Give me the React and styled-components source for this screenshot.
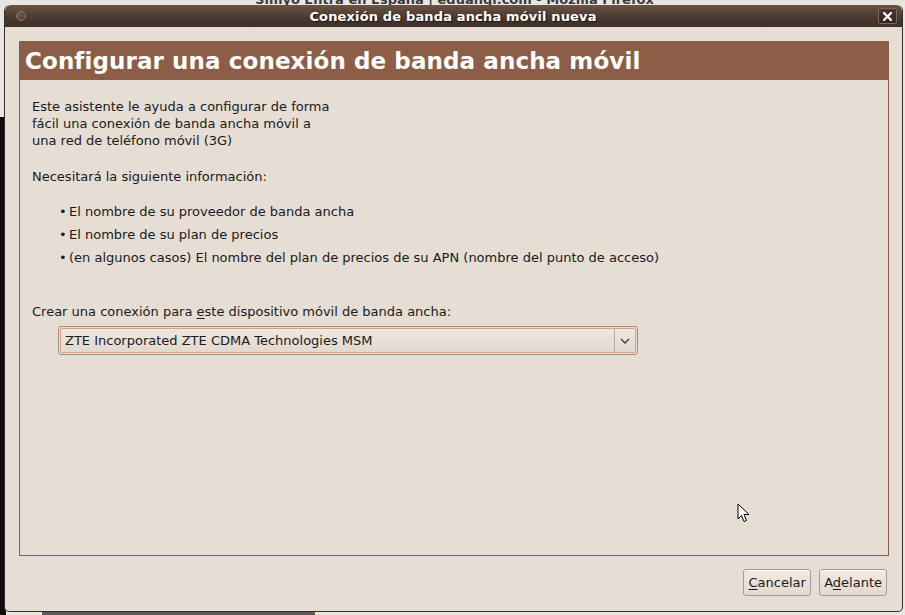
import React from "react";
import styled, { createGlobalStyle } from "styled-components";

const GlobalStyle = createGlobalStyle`
  html, body { margin: 0; padding: 0; }
  body {
    font-family: "DejaVu Sans", "Liberation Sans", sans-serif;
    font-size: 13px;
    color: #1a1a1a;
  }
`;

const Desktop = styled.div`
  position: relative;
  width: 905px;
  height: 615px;
  overflow: hidden;
  background: #e9e6e2;
`;

const BackTitle = styled.div`
  position: absolute;
  left: 0;
  right: 0;
  top: -8px;
  height: 16px;
  text-align: center;
  font-weight: bold;
  font-size: 13px;
  color: #3a3a3a;
  padding-left: 4px;
`;

const BackContent = styled.div`
  position: absolute;
  left: 0;
  top: 117px;
  width: 6px;
  bottom: 0;
  background: #0c0c0c;
`;

const BackStrip = styled.div`
  position: absolute;
  left: 42px;
  width: 273px;
  bottom: 0;
  height: 4px;
  background: #5c5c5c;
`;

const Window = styled.div`
  position: absolute;
  left: 4px;
  top: 5px;
  width: 899px;
  height: 607px;
  display: flex;
  flex-direction: column;
  background: #e6ddd4;
  border: 1px solid #3b2e27;
  border-top: none;
  border-radius: 6px 6px 5px 5px;
  box-sizing: border-box;
  overflow: hidden;
`;

const TitleBar = styled.div`
  height: 22px;
  flex: none;
  display: flex;
  align-items: center;
  justify-content: space-between;
  padding: 0 5px 0 11px;
  background: linear-gradient(#6a5445, #4a3a31 55%, #3c2f28);
  border-radius: 6px 6px 0 0;
`;

const MenuDot = styled.span`
  width: 10px;
  height: 10px;
  border-radius: 50%;
  border: 1px solid #8c7b70;
  box-sizing: border-box;
  background: radial-gradient(circle at 35% 35%, #6e5c50, #4a3a31);
`;

const TitleText = styled.span`
  color: #fff;
  font-weight: bold;
  font-size: 13px;
  text-shadow: 1px 1px 1px #1a120d;
  letter-spacing: 0.15px;
  padding-left: 2px;
`;

const CloseButton = styled.span`
  width: 19px;
  height: 16px;
  border-radius: 2px;
  background: linear-gradient(#4a3a31, #33261f);
  border: 1px solid #7a685c;
  box-sizing: border-box;
  display: flex;
  align-items: center;
  justify-content: center;
`;

const Body = styled.div`
  flex: 1;
  display: flex;
  flex-direction: column;
  padding: 14px 13px 15px 14px;
  min-height: 0;
`;

const Panel = styled.div`
  flex: 1;
  display: flex;
  flex-direction: column;
  border: 1px solid #8c5f48;
  background: #e6ddd4;
`;

const Header = styled.div`
  height: 38px;
  background: #8c5e47;
  color: #fff;
  font-weight: bold;
  font-size: 23px;
  display: flex;
  align-items: center;
  padding-left: 5px;
  letter-spacing: 0.1px;
`;

const Content = styled.div`
  padding: 18px 12px 0 12px;
`;

const Paragraph = styled.p`
  margin: 0 0 ${(p) => p.$gap || 0}px;
  line-height: 17px;
`;

const List = styled.ul`
  list-style: none;
  margin: 15px 0 0;
  padding: 0 0 0 27px;
`;

const Item = styled.li`
  line-height: 23px;
  &::before {
    content: "•";
    display: inline-block;
    width: 10px;
  }
`;

const Label = styled.p`
  margin: 34px 0 6px;
  line-height: 17px;
`;

const Key = styled.span`
  text-decoration: underline;
  text-underline-offset: 2px;
`;

const Combo = styled.div`
  margin-left: 26px;
  width: 580px;
  height: 29px;
  box-sizing: border-box;
  border: 1px solid #9a918a;
  border-radius: 3px;
  padding: 1px;
  background: #e6ddd4;
`;

const ComboInner = styled.div`
  height: 100%;
  box-sizing: border-box;
  border: 1px solid #d9a383;
  border-radius: 2px;
  background: linear-gradient(#efe7df, #e3d8ce);
  display: flex;
  align-items: center;
`;

const ComboText = styled.span`
  flex: 1;
  padding-left: 4px;
`;

const ComboArrow = styled.span`
  width: 20px;
  height: 100%;
  border-left: 1px solid #b8aca2;
  display: flex;
  align-items: center;
  justify-content: center;
`;

const Footer = styled.div`
  flex: none;
  display: flex;
  justify-content: flex-end;
  gap: 8px;
  padding: 13px 2px 0 0;
`;

const Button = styled.button`
  font-family: inherit;
  font-size: 13px;
  color: #1a1a1a;
  height: 27px;
  padding: 0 4px;
  min-width: ${(p) => p.$min || 68}px;
  border: 1px solid #a59c94;
  border-radius: 3px;
  background: linear-gradient(#f1ebe5, #e3d9cf);
  box-shadow: inset 0 1px 0 #fbf8f5;
`;

const Cursor = styled.svg`
  position: absolute;
  left: 737px;
  top: 503px;
`;

export default function App() {
  return (
    <Desktop>
      <GlobalStyle />
      <BackTitle>Simyo Entra en España | eduangi.com - Mozilla Firefox</BackTitle>
      <BackContent />
      <BackStrip />
      <Window>
        <TitleBar>
          <MenuDot />
          <TitleText>Conexión de banda ancha móvil nueva</TitleText>
          <CloseButton>
            <svg width="9" height="9" viewBox="0 0 9 9">
              <path d="M1 1 L8 8 M8 1 L1 8" stroke="#fff" strokeWidth="2.2" strokeLinecap="square" />
            </svg>
          </CloseButton>
        </TitleBar>
        <Body>
          <Panel>
            <Header>Configurar una conexión de banda ancha móvil</Header>
            <Content>
              <Paragraph $gap={19}>
                Este asistente le ayuda a configurar de forma
                <br />
                fácil una conexión de banda ancha móvil a
                <br />
                una red de teléfono móvil (3G)
              </Paragraph>
              <Paragraph>Necesitará la siguiente información:</Paragraph>
              <List>
                <Item>El nombre de su proveedor de banda ancha</Item>
                <Item>El nombre de su plan de precios</Item>
                <Item>(en algunos casos) El nombre del plan de precios de su APN (nombre del punto de acceso)</Item>
              </List>
              <Label>
                Crear una conexión para <Key>e</Key>ste dispositivo móvil de banda ancha:
              </Label>
              <Combo>
                <ComboInner>
                  <ComboText>ZTE Incorporated ZTE CDMA Technologies MSM</ComboText>
                  <ComboArrow>
                    <svg width="10" height="6" viewBox="0 0 10 6">
                      <path d="M1 1 L5 5 L9 1" fill="none" stroke="#3a3a3a" strokeWidth="1.3" />
                    </svg>
                  </ComboArrow>
                </ComboInner>
              </Combo>
            </Content>
          </Panel>
          <Footer>
            <Button>
              <Key>C</Key>ancelar
            </Button>
            <Button $min={67}>
              A<Key>d</Key>elante
            </Button>
          </Footer>
        </Body>
      </Window>
      <Cursor width="13" height="20" viewBox="0 0 13 20">
        <path d="M1 1 L1 16 L4.5 12.5 L7 18.5 L9.5 17.5 L7 11.5 L12 11.5 Z" fill="#fff" stroke="#000" strokeWidth="1" strokeLinejoin="round" />
      </Cursor>
    </Desktop>
  );
}
